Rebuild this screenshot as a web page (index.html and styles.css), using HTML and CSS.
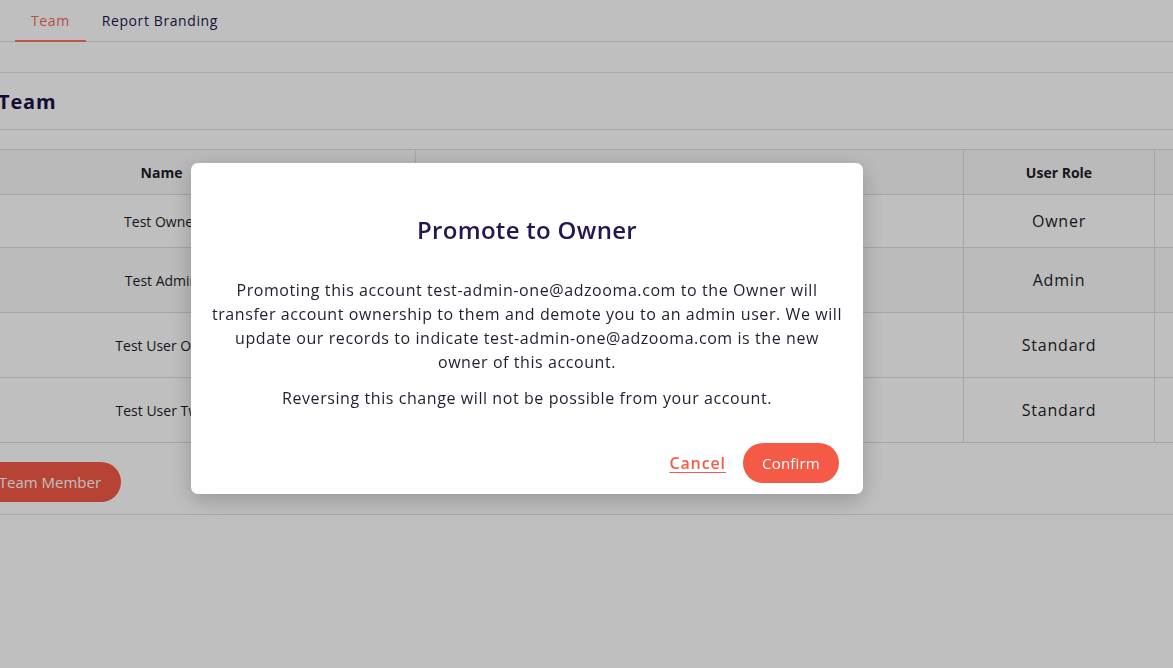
FILE: index.html
```html
<!DOCTYPE html>
<html lang="en">
<head>
<meta charset="utf-8">
<title>Team</title>
<link rel="stylesheet" href="styles.css">
</head>
<body>
<div class="app">
  <nav class="tabs">
    <a class="tab active">Team</a>
    <a class="tab">Report Branding</a>
  </nav>
  <section class="card">
    <div class="card-head"><h2 class="card-title">Team</h2></div>
    <div class="card-body">
      <table class="team-table">
        <thead>
          <tr>
            <th class="col-name">Name</th>
            <th class="col-email">Email</th>
            <th class="col-role">User Role</th>
            <th class="col-actions">Actions</th>
          </tr>
        </thead>
        <tbody>
          <tr class="row-short">
            <td class="cell-name">Test Owner</td>
            <td class="cell-email">test-owner@adzooma.com</td>
            <td class="cell-role">Owner</td>
            <td></td>
          </tr>
          <tr class="row-tall">
            <td class="cell-name">Test Admin</td>
            <td class="cell-email">test-admin-one@adzooma.com</td>
            <td class="cell-role">Admin</td>
            <td></td>
          </tr>
          <tr class="row-tall">
            <td class="cell-name">Test User One</td>
            <td class="cell-email">test-user-one@adzooma.com</td>
            <td class="cell-role">Standard</td>
            <td></td>
          </tr>
          <tr class="row-tall">
            <td class="cell-name">Test User Two</td>
            <td class="cell-email">test-user-two@adzooma.com</td>
            <td class="cell-role">Standard</td>
            <td></td>
          </tr>
        </tbody>
      </table>
      <div class="actions-row">
        <button class="btn-add">Add Team Member</button>
      </div>
    </div>
  </section>
</div>

<div class="overlay">
  <div class="modal" role="dialog" aria-labelledby="modal-title">
    <h3 class="modal-title" id="modal-title">Promote to Owner</h3>
    <p class="modal-text">Promoting this account test-admin-one@adzooma.com to the Owner will<br>transfer account ownership to them and demote you to an admin user. We will<br>update our records to indicate test-admin-one@adzooma.com is the new<br>owner of this account.</p>
    <p class="modal-text second">Reversing this change will not be possible from your account.</p>
    <div class="modal-footer">
      <a class="link-cancel">Cancel</a>
      <button class="btn-confirm">Confirm</button>
    </div>
  </div>
</div>
</body>
</html>
```
FILE: styles.css
```css
html, body {
  margin: 0;
  padding: 0;
  overflow: hidden;
  background: #ffffff;
}

body {
  font-family: "Open Sans", "Liberation Sans", sans-serif;
  color: #1f1f2e;
  width: 1173px;
  height: 668px;
}

.app {
  width: 1173px;
}

.tabs {
  display: flex;
  padding-left: 15px;
  height: 42px;
  border-bottom: 1px solid #e2e2e2;
  box-sizing: border-box;
}

.tab {
  display: flex;
  align-items: center;
  padding: 0 16px;
  font-size: 14px;
  font-weight: 500;
  letter-spacing: 0.6px;
  color: #24164f;
  border-bottom: 2px solid transparent;
  margin-bottom: -1px;
}

.tab.active {
  color: #f26a58;
  border-bottom-color: #fe7464;
}

.card {
  margin-top: 30px;
  border-top: 1px solid #e2e2e2;
  border-bottom: 1px solid #e2e2e2;
}

.card-head {
  height: 56px;
  display: flex;
  align-items: center;
  border-bottom: 1px solid #e2e2e2;
}

.card-title {
  margin: 0;
  font-size: 20px;
  font-weight: 700;
  letter-spacing: 0.8px;
  color: #1d1146;
  margin-left: -2px;
}

.card-body {
  padding: 19px 0 12px 0;
  margin-left: -92px;
}

.team-table {
  border-collapse: collapse;
  table-layout: fixed;
  width: 1400px;
  border-top: 1px solid #dcdde6;
  border-bottom: 1px solid #dcdde6;
}

.team-table th,
.team-table td {
  text-align: center;
  padding: 0;
  border-right: 1px solid #dcdde6;
  border-bottom: 1px solid #dcdde6;
}

.team-table th {
  height: 44px;
  font-size: 14px;
  font-weight: 700;
  color: #1c1c28;
  background: #f9f9f9;
}

.col-name { width: 507px; }
.col-email { width: 547px; }
.col-role { width: 190px; }

.row-short td { height: 52px; }
.row-tall td { height: 64px; }

.row-tall:nth-child(2) td { background: #fafafa; }

.cell-name {
  font-size: 14px;
  color: #1c1c28;
}

.cell-email {
  font-size: 14px;
  color: #1c1c28;
}

.cell-role {
  font-size: 16px;
  letter-spacing: 0.8px;
  color: #1c1c28;
  padding-bottom: 1px;
}

.actions-row {
  display: flex;
  padding-top: 19px;
  padding-left: 39px;
}

.btn-add {
  font-family: inherit;
  height: 40px;
  border: none;
  border-radius: 20px;
  background: #f55a47;
  color: #ffffff;
  font-size: 15px;
  padding: 0 20px;
}

/* overlay + modal */
.overlay {
  position: fixed;
  inset: 0;
  background: rgba(0, 0, 0, 0.25);
  display: flex;
  justify-content: center;
  align-items: flex-start;
  padding-top: 163px;
  padding-right: 119px;
}

.modal {
  width: 672px;
  height: 331px;
  box-sizing: border-box;
  background: #ffffff;
  border-radius: 7px;
  box-shadow: 0 6px 22px rgba(0, 0, 0, 0.22);
  padding: 49px 10px 11px 10px;
  display: flex;
  flex-direction: column;
  text-align: center;
}

.modal-title {
  margin: 0;
  font-size: 24px;
  line-height: 36px;
  font-weight: 600;
  letter-spacing: 0.3px;
  color: #24164f;
}

.modal-text {
  margin: 30px 0 0 0;
  font-size: 16px;
  line-height: 24px;
  letter-spacing: 0.58px;
  color: #1f1f2e;
  white-space: nowrap;
}

.modal-text.second {
  margin-top: 12px;
}

.modal-footer {
  margin-top: auto;
  display: flex;
  justify-content: flex-end;
  align-items: center;
  gap: 17px;
  padding-right: 14px;
}

.link-cancel {
  font-size: 16px;
  font-weight: 600;
  letter-spacing: 0.9px;
  color: #f55a47;
  text-decoration: underline;
  text-underline-offset: 3px;
}

.btn-confirm {
  font-family: inherit;
  height: 40px;
  width: 96px;
  border: none;
  border-radius: 20px;
  background: #f55a47;
  color: #ffffff;
  font-size: 15px;
  font-weight: 500;
  letter-spacing: 0.2px;
}
```
